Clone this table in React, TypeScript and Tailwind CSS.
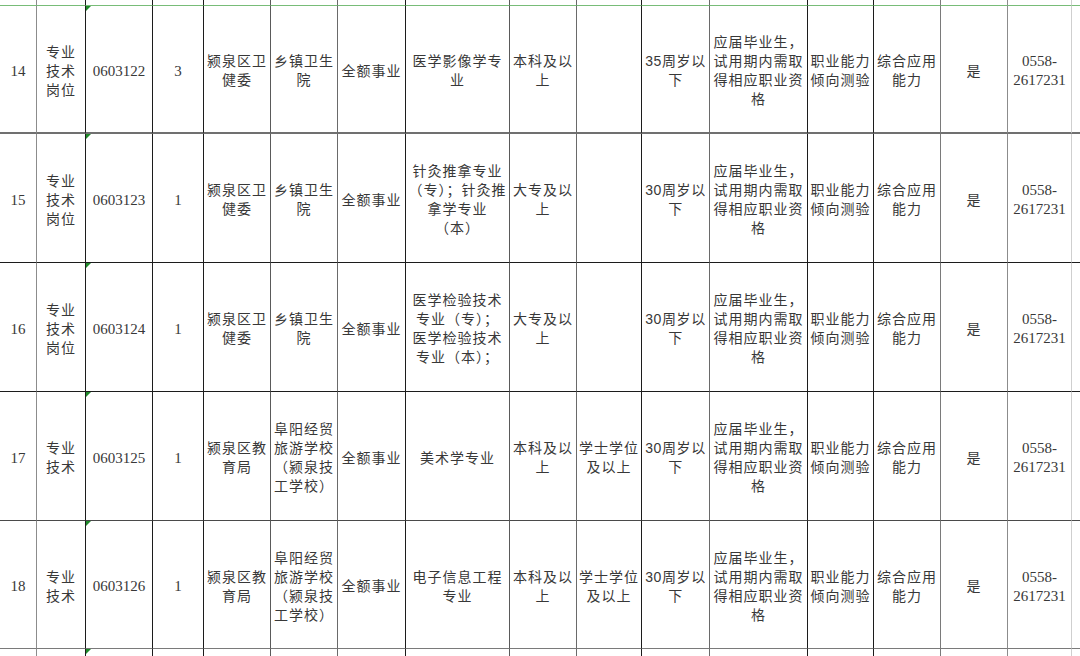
import React from 'react'

type Row = {
  no: string
  post: string[]
  code: string
  count: string
  dept: string[]
  unit: string[]
  major: string[]
  edu: string[]
  degree: string[]
  age: string[]
}

const cond = ['应届毕业生，', '试用期内需取', '得相应职业资', '格']

const rows: Row[] = [
  {
    no: '14', post: ['专业', '技术', '岗位'], code: '0603122', count: '3',
    dept: ['颍泉区卫', '健委'], unit: ['乡镇卫生', '院'],
    major: ['医学影像学专', '业'], edu: ['本科及以', '上'], degree: [], age: ['35周岁以', '下'],
  },
  {
    no: '15', post: ['专业', '技术', '岗位'], code: '0603123', count: '1',
    dept: ['颍泉区卫', '健委'], unit: ['乡镇卫生', '院'],
    major: ['针灸推拿专业', '（专）；针灸推', '拿学专业', '（本）'], edu: ['大专及以', '上'], degree: [], age: ['30周岁以', '下'],
  },
  {
    no: '16', post: ['专业', '技术', '岗位'], code: '0603124', count: '1',
    dept: ['颍泉区卫', '健委'], unit: ['乡镇卫生', '院'],
    major: ['医学检验技术', '专业（专）；', '医学检验技术', '专业（本）；'], edu: ['大专及以', '上'], degree: [], age: ['30周岁以', '下'],
  },
  {
    no: '17', post: ['专业', '技术'], code: '0603125', count: '1',
    dept: ['颍泉区教', '育局'], unit: ['阜阳经贸', '旅游学校', '（颍泉技', '工学校）'],
    major: ['美术学专业'], edu: ['本科及以', '上'], degree: ['学士学位', '及以上'], age: ['30周岁以', '下'],
  },
  {
    no: '18', post: ['专业', '技术'], code: '0603126', count: '1',
    dept: ['颍泉区教', '育局'], unit: ['阜阳经贸', '旅游学校', '（颍泉技', '工学校）'],
    major: ['电子信息工程', '专业'], edu: ['本科及以', '上'], degree: ['学士学位', '及以上'], age: ['30周岁以', '下'],
  },
]

// right border colour of each column, as drawn in the sheet
const colBorder = [
  'border-r border-r-[#8c8c8c]',
  'border-r border-r-[#1c1c1c]',
  'border-r border-r-[#1c1c1c]',
  'border-r border-r-[#1c1c1c]',
  'border-r border-r-[#5a5a5a]',
  'border-r border-r-[#6a6a6a]',
  'border-r border-r-[#1c1c1c]',
  'border-r border-r-[#5a5a5a]',
  'border-r border-r-[#6a6a6a]',
  'border-r border-r-[#1c1c1c]',
  'border-r border-r-[#6a6a6a]',
  'border-r border-r-[#1c1c1c]',
  'border-r border-r-[#1c1c1c]',
  'border-r border-r-[#7a7a7a]',
  'border-r border-r-[#8c8c8c]',
  'border-r border-r-[#cfcfcf]',
  '',
]

const rowBorder = [
  'border-b border-b-[#78bc78]',
  'border-b-2 border-b-[#707070]',
  'border-b border-b-[#1c1c1c]',
  'border-b border-b-[#1c1c1c]',
  'border-b border-b-[#4a4a4a]',
  'border-b border-b-[#7a7a7a]',
  '',
]

const serif = "font-['Liberation_Serif','Noto_Sans_CJK_SC',serif]"
const sans = "font-['Liberation_Sans','Noto_Sans_CJK_SC',sans-serif]"

function Lines({ lines, num, age }: { lines: string[]; num?: boolean; age?: boolean }) {
  return (
    <div
      className={
        num
          ? `${serif} text-[15px] leading-[19px]`
          : age
          ? `${sans} text-[14px] leading-[19px] tracking-[0.6px]`
          : `${serif} text-[14px] leading-[19px] tracking-[1px]`
      }
    >
      {lines.map((l, i) => (
        <div key={i} className="whitespace-nowrap">{l}</div>
      ))}
    </div>
  )
}

function Cell({ col, row, children, mark }: { col: number; row: number; children?: React.ReactNode; mark?: boolean }) {
  return (
    <div
      className={`relative flex items-center justify-center pt-[4px] text-center text-[#383838] overflow-hidden ${colBorder[col]} ${rowBorder[row]}`}
    >
      {mark && (
        <span className="absolute left-0 top-0 w-0 h-0 border-t-[5px] border-r-[5px] border-t-[#1f8a2a] border-r-transparent" />
      )}
      {children}
    </div>
  )
}

export default function App() {
  const blank = (row: number) =>
    colBorder.map((_, c) => <Cell key={c} col={c} row={row} mark={c === 2 && row === 6} />)

  return (
    <div className="w-[1080px] h-[656px] overflow-hidden bg-white">
      <div className="grid grid-cols-[37px_49px_67px_51px_67px_67px_68px_104px_67px_65px_68px_98px_66px_67px_67px_64px_8px] grid-rows-[6px_128px_129px_129px_129px_128px_8px]">
        {blank(0)}
        {rows.map((r, i) => {
          const row = i + 1
          const cells: { lines: string[]; num?: boolean; age?: boolean }[] = [
            { lines: [r.no], num: true },
            { lines: r.post },
            { lines: [r.code], num: true },
            { lines: [r.count], num: true },
            { lines: r.dept },
            { lines: r.unit },
            { lines: ['全额事业'] },
            { lines: r.major },
            { lines: r.edu },
            { lines: r.degree },
            { lines: r.age, age: true },
            { lines: cond },
            { lines: ['职业能力', '倾向测验'] },
            { lines: ['综合应用', '能力'] },
            { lines: ['是'] },
            { lines: ['0558-', '2617231'], num: true },
            { lines: [] },
          ]
          return (
            <React.Fragment key={r.no}>
              {cells.map((c, ci) => (
                <Cell key={ci} col={ci} row={row} mark={ci === 2}>
                  {c.lines.length > 0 && <Lines lines={c.lines} num={c.num} age={c.age} />}
                </Cell>
              ))}
            </React.Fragment>
          )
        })}
        {blank(6)}
      </div>
    </div>
  )
}
